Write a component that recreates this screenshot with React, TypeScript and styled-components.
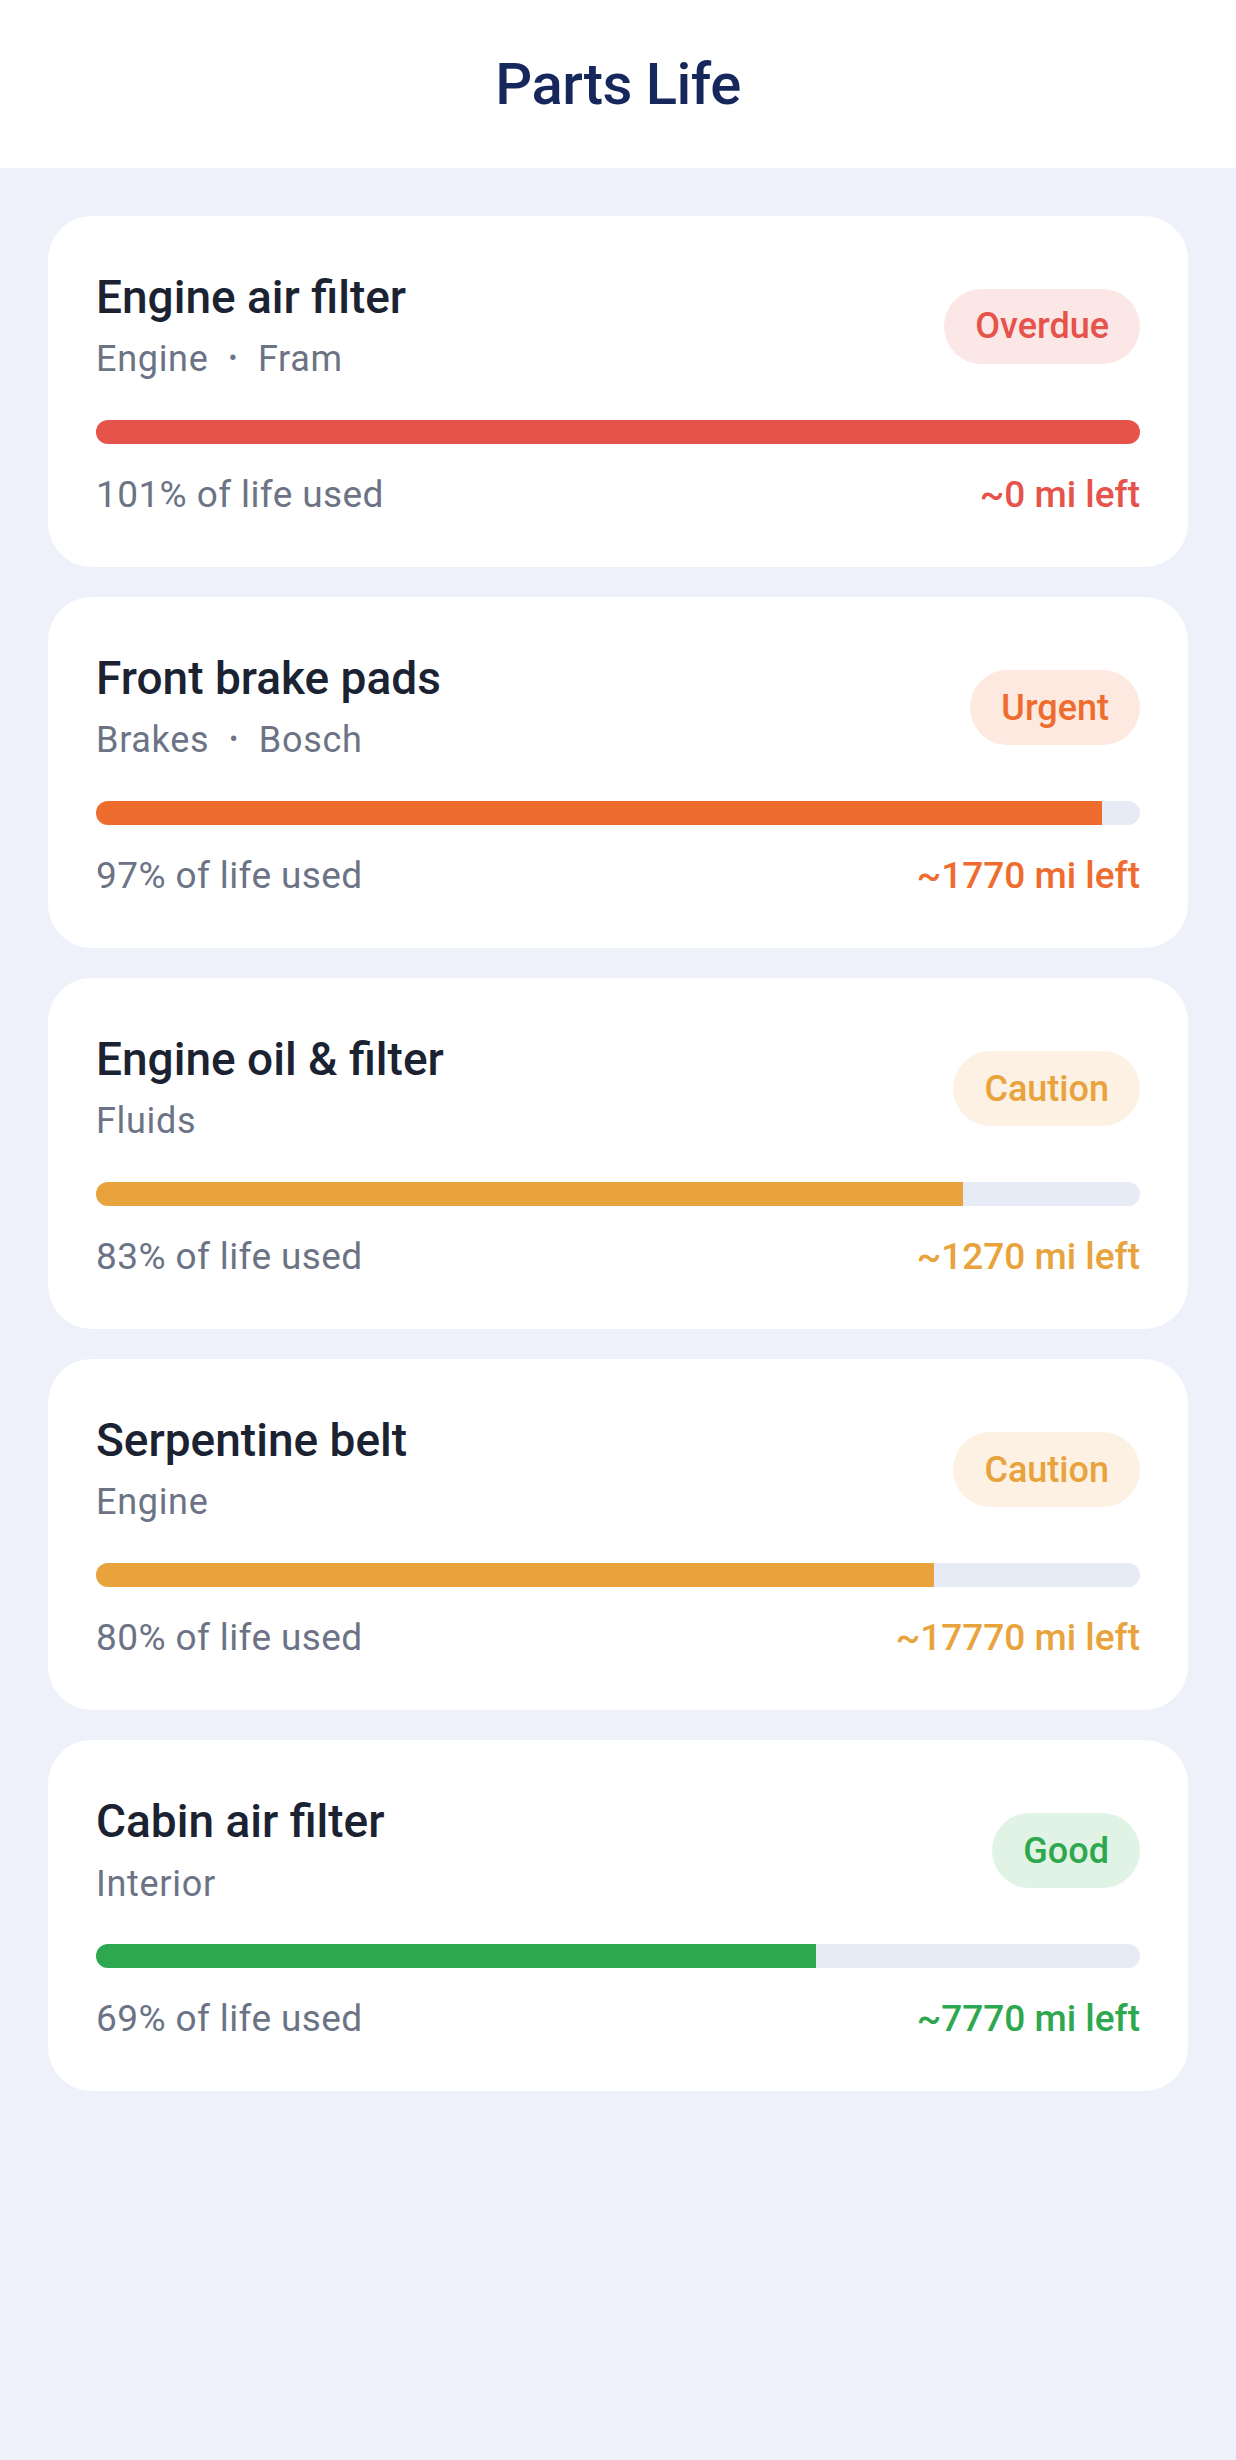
import React from "react";
import styled, { createGlobalStyle } from "styled-components";

const GlobalStyle = createGlobalStyle`
  html, body {
    margin: 0;
    padding: 0;
    background: #eef1f9;
    font-family: Roboto, "Liberation Sans", Arial, sans-serif;
  }
  * {
    box-sizing: border-box;
  }
`;

type Status = "overdue" | "urgent" | "caution" | "good";

const palette: Record<Status, { main: string; soft: string; label: string }> = {
  overdue: { main: "#e5534b", soft: "#fbe7e6", label: "Overdue" },
  urgent: { main: "#ef6c2f", soft: "#fde9df", label: "Urgent" },
  caution: { main: "#e8a33c", soft: "#fcf1e3", label: "Caution" },
  good: { main: "#2ea84e", soft: "#e0f3e4", label: "Good" },
};

const Page = styled.div`
  min-height: 2460px;
  background: #eef1f9;
`;

const Header = styled.header`
  height: 168px;
  background: #ffffff;
  display: flex;
  align-items: center;
  justify-content: center;
`;

const PageTitle = styled.h1`
  margin: 0;
  font-size: 58px;
  font-weight: 500;
  color: #16275c;
  letter-spacing: -0.5px;
`;

const List = styled.main`
  display: flex;
  flex-direction: column;
  gap: 30px;
  padding: 48px 48px;
`;

const Card = styled.section`
  background: #ffffff;
  border-radius: 44px;
  padding: 54px 48px 48px;
`;

const CardHead = styled.div`
  display: flex;
  align-items: center;
  justify-content: space-between;
`;

const Info = styled.div`
  display: flex;
  flex-direction: column;
  gap: 11px;
`;

const PartName = styled.h2`
  margin: 0;
  font-size: 46px;
  line-height: 1.2;
  font-weight: 500;
  color: #1b2232;
`;

const Meta = styled.div`
  font-size: 36px;
  line-height: 1.3;
  letter-spacing: 0.7px;
  color: #6b7385;
`;

const Dot = styled.span`
  margin: 0 20px;
  font-size: 26px;
  vertical-align: 4px;
`;

const Badge = styled.span<{ $status: Status }>`
  display: inline-flex;
  align-items: center;
  height: 75px;
  padding: 0 31px;
  border-radius: 38px;
  font-size: 36px;
  font-weight: 500;
  color: ${(p) => palette[p.$status].main};
  background: ${(p) => palette[p.$status].soft};
`;

const Track = styled.div`
  margin-top: 37px;
  height: 24px;
  border-radius: 12px;
  background: #e7ebf5;
  overflow: hidden;
`;

const Fill = styled.div<{ $status: Status }>`
  height: 100%;
  background: ${(p) => palette[p.$status].main};
`;

const Footer = styled.div`
  margin-top: 27px;
  display: flex;
  justify-content: space-between;
  align-items: baseline;
  font-size: 37px;
  line-height: 1.3;
`;

const Used = styled.span`
  color: #6b7385;
  letter-spacing: 0.4px;
`;

const Left = styled.span<{ $status: Status }>`
  font-weight: 500;
  color: ${(p) => palette[p.$status].main};
`;

const parts: {
  name: string;
  meta: string[];
  status: Status;
  used: number;
  bar: number;
  left: string;
}[] = [
  { name: "Engine air filter", meta: ["Engine", "Fram"], status: "overdue", used: 101, bar: 100, left: "~0 mi left" },
  { name: "Front brake pads", meta: ["Brakes", "Bosch"], status: "urgent", used: 97, bar: 96.4, left: "~1770 mi left" },
  { name: "Engine oil & filter", meta: ["Fluids"], status: "caution", used: 83, bar: 83, left: "~1270 mi left" },
  { name: "Serpentine belt", meta: ["Engine"], status: "caution", used: 80, bar: 80.3, left: "~17770 mi left" },
  { name: "Cabin air filter", meta: ["Interior"], status: "good", used: 69, bar: 69, left: "~7770 mi left" },
];

const App = () => {
  return (
    <>
      <GlobalStyle />
      <Page>
        <Header>
          <PageTitle>Parts Life</PageTitle>
        </Header>
        <List>
          {parts.map((part) => (
            <Card key={part.name}>
              <CardHead>
                <Info>
                  <PartName>{part.name}</PartName>
                  <Meta>
                    {part.meta.map((m, i) => (
                      <React.Fragment key={m}>
                        {i > 0 && <Dot>•</Dot>}
                        {m}
                      </React.Fragment>
                    ))}
                  </Meta>
                </Info>
                <Badge $status={part.status}>{palette[part.status].label}</Badge>
              </CardHead>
              <Track>
                <Fill $status={part.status} style={{ width: `${part.bar}%` }} />
              </Track>
              <Footer>
                <Used>{part.used}% of life used</Used>
                <Left $status={part.status}>{part.left}</Left>
              </Footer>
            </Card>
          ))}
        </List>
      </Page>
    </>
  );
};

export default App;
